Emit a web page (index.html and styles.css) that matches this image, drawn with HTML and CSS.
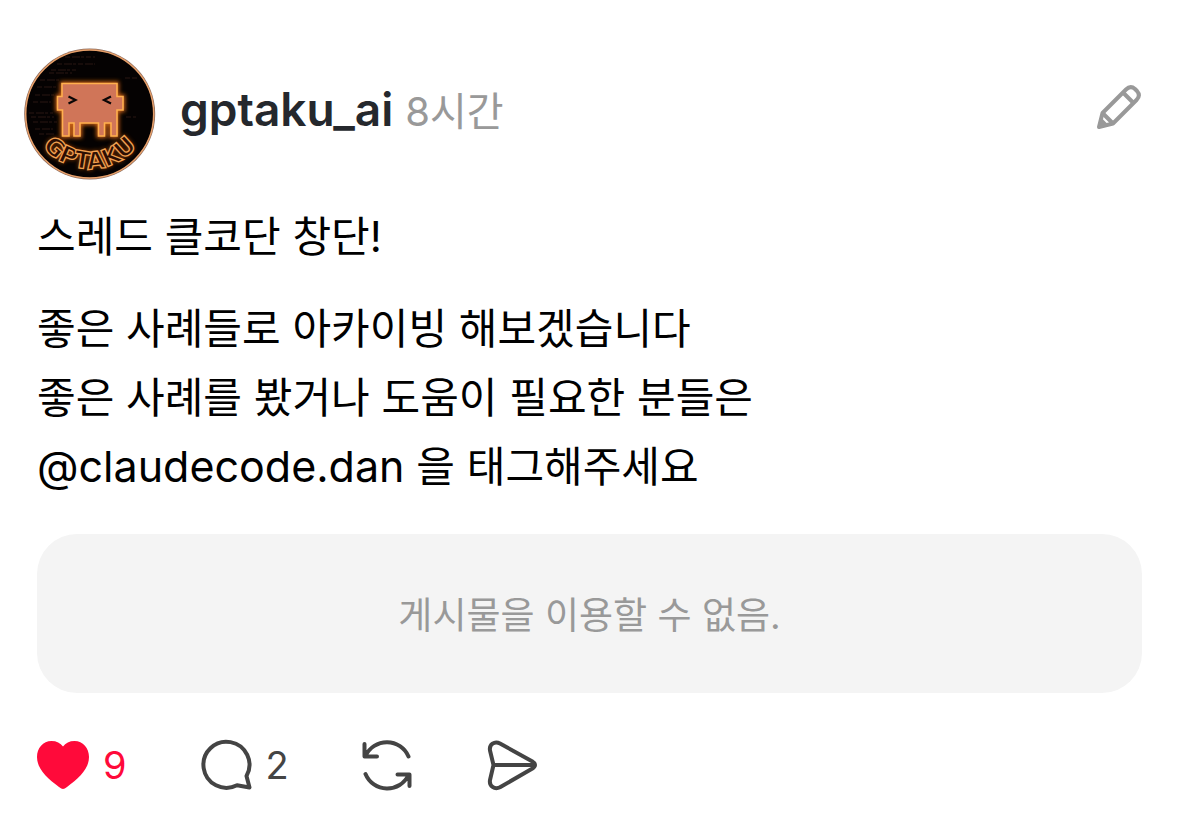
FILE: index.html
```html
<!DOCTYPE html>
<html lang="ko">
<head>
<meta charset="utf-8">
<meta name="viewport" content="width=device-width, initial-scale=1">
<title>gptaku_ai</title>
<link rel="stylesheet" href="styles.css">
</head>
<body>
<article class="post">
  <header class="post-header">
    <svg class="avatar" viewBox="9 8 132 132" role="img" aria-label="gptaku_ai">
      <defs>
        <filter id="glow" x="-30%" y="-30%" width="160%" height="160%">
          <feGaussianBlur stdDeviation="2"/>
        </filter>
        <path id="name-arc" d="M14.2 68.5A60.5 60.5 0 0 0 135.2 68.5"/>
        <path id="crab" d="M47 43.5H102V56.5H108V70H102V96H96V83H89.5V96H83.5V83H65V96H59V83H54V96H47.500V70H42.500V56.500H47Z"/>
      </defs>
      <circle cx="74.700" cy="74" r="65.500" fill="#8a6a5c"/>
      <circle cx="74.700" cy="74" r="64" fill="#050202" stroke="#e8a06a" stroke-width="1.500"/>
      <g class="avatar-code">
        <path d="M50 17H80M42 24H80M36 30H61M34 33H57M25 40H46M22 47H42M20 55H40M18 62H36M14 73H38M16 77H39M18 82H42M20 89H38M24 94H40M111 77H121M110 38H122"/>
      </g>
      <use href="#crab" fill="#ff7a1c" stroke="#ff7a1c" stroke-width="4" filter="url(#glow)" opacity=".8"/>
      <use href="#crab" fill="#d07558" stroke="#ffb04e" stroke-width="1.600"/>
      <path d="M53.500 56.500L60.500 60L53.500 63.500M96 56.500L89 60L96 63.500" fill="none" stroke="#0a0606" stroke-width="2.200"/>
      <text class="avatar-name avatar-name-glow" filter="url(#glow)" aria-hidden="true"><textPath href="#name-arc" startOffset="50%">GPTAKU</textPath></text>
      <text class="avatar-name"><textPath href="#name-arc" startOffset="50%">GPTAKU</textPath></text>
    </svg>
    <div class="byline">
      <a class="author" href="#">gptaku_ai</a>
      <time class="age">8시간</time>
    </div>
    <button class="edit" type="button" aria-label="수정">
      <svg class="icon-edit" viewBox="0 0 46 46">
        <path d="M3 43L6.500 29L30 5.500Q34.500 1 39 5L41 7Q45 11.500 40.500 16L17 39.500Z"/>
        <path d="M6.500 29L17 39.500M27 8.500L37.500 19"/>
        <path class="tip" d="M2 44L4.500 34Q10 37 12 41.500Z"/>
      </svg>
    </button>
  </header>

  <div class="post-body">
    <p class="paragraph">스레드 클코단 창단!</p>
    <p class="paragraph">좋은 사례들로 아카이빙 해보겠습니다<br>좋은 사례를 봤거나 도움이 필요한 분들은<br><span class="mention">@claudecode.dan</span> 을 태그해주세요</p>
  </div>

  <div class="unavailable">게시물을 이용할 수 없음.</div>

  <footer class="actions">
    <button class="action liked" type="button" aria-label="좋아요 9">
      <svg class="icon" viewBox="0 0 52 52">
        <path class="heart" d="M26 50Q24.500 50 22 48C10 39 0 30 0 18C0 9 6 2 14.500 2C19.500 2 23.500 4 26 7.500C28.500 4 32.500 2 37.500 2C46 2 52 9 52 18C52 30 42 39 30 48Q27.500 50 26 50Z"/>
      </svg>
      <span>9</span>
    </button>
    <button class="action" type="button" aria-label="댓글 2">
      <svg class="icon" viewBox="-1 0 52 52">
        <path d="M45.500 37A23 23 0 1 0 36 46.200L48.500 48.500Z"/>
      </svg>
      <span>2</span>
    </button>
    <button class="action" type="button" aria-label="리포스트">
      <svg class="icon round" viewBox="1 0 52 52">
        <path d="M3.500 5V17.500H16M4.500 17A23.500 23.500 0 0 1 47.500 17.500M48.500 47V35.500H36.500M47.500 36A23.500 23.500 0 0 1 4.500 35"/>
      </svg>
    </button>
    <button class="action" type="button" aria-label="공유">
      <svg class="icon round" viewBox="1 0 52 52">
        <path d="M14 4.500L46 22.200Q52 26 46 29.800L14 48.300C8.500 51 3 47 4 41L7.500 26L4 11.500C3 5.500 8.500 1.500 14 4.500ZM7.500 26H48"/>
      </svg>
    </button>
  </footer>
</article>
</body>
</html>
```
FILE: styles.css
```css
* {
  box-sizing: border-box;
}

body {
  margin: 0;
  background: #fff;
  color: #000;
  font-family: Inter, "Noto Sans CJK KR", sans-serif;
}

button {
  padding: 0;
  border: 0;
  background: none;
  font: inherit;
  cursor: pointer;
}

svg {
  display: block;
  flex: none;
}

.post {
  padding: 48px 37px 32px;
}

.post-header {
  display: flex;
  align-items: center;
  gap: 24px;
  margin-left: -13px;
}

.avatar {
  width: 132px;
  height: 132px;
}

.avatar-code {
  stroke: #3a211b;
  stroke-width: 1;
  stroke-dasharray: 5 2 8 1 3 2;
  opacity: 0.7;
}

.avatar-name {
  fill: #2a0f04;
  stroke: #f0a050;
  stroke-width: 1.3;
  font-family: "DejaVu Sans", sans-serif;
  font-size: 24px;
  font-weight: 700;
  text-anchor: middle;
}

.avatar-name-glow {
  fill: #e06010;
  stroke: #e06010;
  opacity: 0.6;
}

.byline {
  display: flex;
  flex: 1;
  align-items: baseline;
  gap: 12px;
  padding-bottom: 8px;
  line-height: 60px;
}

.author {
  color: #25282d;
  font-size: 46px;
  font-weight: 600;
  text-decoration: none;
}

.age {
  color: #999;
  font-size: 40px;
}

.edit {
  padding-bottom: 14px;
}

.icon-edit {
  width: 46px;
  height: 46px;
  fill: none;
  stroke: #999;
  stroke-width: 4;
  stroke-linejoin: round;
}

.icon-edit .tip {
  fill: #999;
  stroke: none;
}

.post-body {
  display: grid;
  gap: 23px;
  padding-top: 22px;
  font-size: 42px;
  line-height: 69px;
}

.paragraph {
  margin: 0;
}

.mention {
  font-size: 43px;
}

.unavailable {
  margin-top: 33px;
  padding: 52px 24px 48px;
  border-radius: 40px;
  background: #f4f4f4;
  color: #999;
  font-size: 37px;
  line-height: 59px;
  text-align: center;
}

.actions {
  display: flex;
  align-items: center;
  gap: 73px;
  padding-top: 46px;
}

.action {
  display: flex;
  align-items: center;
  gap: 14px;
  color: #444;
  font-size: 38px;
  line-height: 52px;
}

.liked {
  color: #ff0a3a;
}

.icon {
  width: 52px;
  height: 52px;
  fill: none;
  stroke: currentColor;
  stroke-width: 4;
  stroke-linejoin: round;
}

.round {
  stroke-linecap: round;
}

.icon .heart {
  fill: currentColor;
  stroke: none;
}
```
